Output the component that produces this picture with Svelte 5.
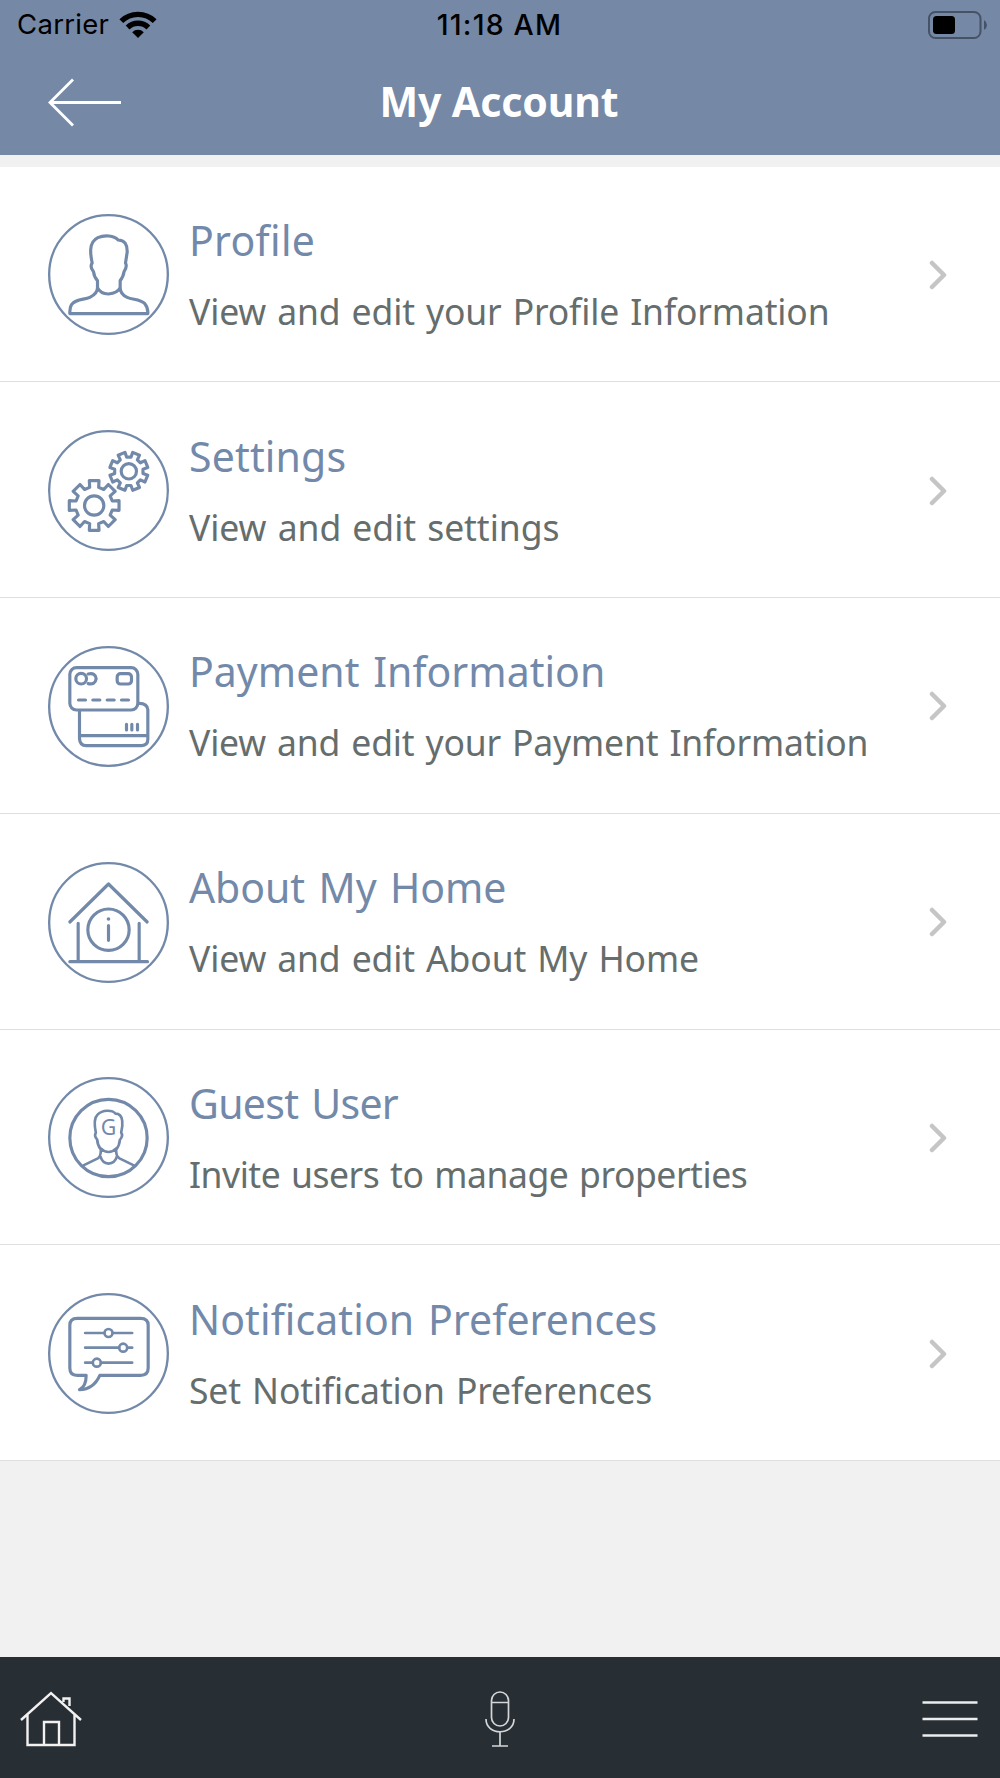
<script>
	// spacing holds the letter-spacing of the title and the text, in px
	const items = [
		{ icon: 'profile', title: 'Profile', text: 'View and edit your Profile Information', spacing: [0.3, -0.14] },
		{ icon: 'settings', title: 'Settings', text: 'View and edit settings', spacing: [0.15, -0.05] },
		{ icon: 'payment', title: 'Payment Information', text: 'View and edit your Payment Information', spacing: [0.02, -0.17] },
		{ icon: 'home', title: 'About My Home', text: 'View and edit About My Home', spacing: [-0.08, -0.13] },
		{ icon: 'guest', title: 'Guest User', text: 'Invite users to manage properties', spacing: [-0.7, -0.46] },
		{ icon: 'notify', title: 'Notification Preferences', text: 'Set Notification Preferences', spacing: [0.08, -0.12] }
	];

	/**
	 * Outline of an eight-toothed gear
	 * @param {number} cx
	 * @param {number} cy
	 * @param {number} outer
	 * @param {number} inner
	 * @param {number} offset rotation in degrees
	 * @returns {string}
	 */
	function gearPath(cx, cy, outer, inner, offset) {
		const points = [];
		for (let i = 0; i < 8; i++) {
			const mid = i * 45 + offset;
			for (const [r, a] of [
				[inner, mid - 14],
				[outer, mid - 11],
				[outer, mid + 11],
				[inner, mid + 14]
			]) {
				const rad = (a * Math.PI) / 180;
				points.push(`${(cx + r * Math.sin(rad)).toFixed(1)} ${(cy - r * Math.cos(rad)).toFixed(1)}`);
			}
		}
		return `M${points.join('L')}Z`;
	}
</script>

<div class="screen">
	<header class="header">
		<div class="status">
			<div class="status__carrier">
				<span>Carrier</span>
				<svg width="38" height="28" viewBox="0 0 38 28" aria-hidden="true">
					<g fill="none" stroke="#000" stroke-width="5.4">
						<path d="M2.3 10.1a24 24 0 0 1 33.4 0" />
						<path d="M8.6 16.5a15 15 0 0 1 20.8 0" />
					</g>
					<path d="M13.2 21.2a8.3 8.3 0 0 1 11.6 0L19 27z" />
				</svg>
			</div>
			<span class="status__time">11:18 AM</span>
			<svg class="status__battery" width="60" height="28" viewBox="0 0 60 28" aria-hidden="true">
				<rect x="1" y="1" width="51.5" height="26" rx="6.5" fill="none" stroke="#465266" stroke-width="2" />
				<rect x="5" y="5" width="22" height="18" rx="3.5" />
				<path d="M56 9q3 2 3 5t-3 5z" fill="#465266" />
			</svg>
		</div>
		<div class="navbar">
			<button type="button" class="navbar__back" aria-label="Back">
				<svg width="74" height="50" viewBox="0 0 74 50" fill="none" stroke="#fff" stroke-width="2.8">
					<path d="M73 25.500H2M25 2.500 2 25.500l23 23" />
				</svg>
			</button>
			<h1>My Account</h1>
		</div>
	</header>

	<main>
		{#each items as item}
			<div class="row">
				<svg class="row__icon" viewBox="24.5 27 363 363" aria-hidden="true">
					<circle class="ring" cx="206" cy="208.5" r="178" />
					{#if item.icon === 'profile'}
						<path d="M90 326H324Q325 308 315 296C300 281 278 285 262 277Q241 267 241 248V227Q250 217 253 199Q263 184 257 174L262 142C263 118 254 105 235 105C223 91 194 89 174 98C145 112 152 150 157 174Q149 185 161 200Q163 217 173 227V248Q173 265 150 277C134 285 109 280 95 299Q89 309 90 326ZM173 248Q181 266 206 267Q233 265 241 248" />
					{:else if item.icon === 'settings'}
						<path d={gearPath(163, 253.5, 76, 56, 0)} />
						<circle cx="163" cy="253.5" r="29" />
						<path d={gearPath(267, 151, 58, 43, 22.5)} />
						<circle cx="267" cy="151" r="23" />
					{:else if item.icon === 'payment'}
						<rect x="90" y="92" width="204" height="127" rx="20" />
						<path d="M119 221V305Q120 326 139 326H306Q324 325 324 307V218Q322 199 298 199M121 296H323" />
						<circle cx="124" cy="125" r="16" />
						<path d="M145 111Q167 106 169 125Q166 144 145 140" />
						<rect x="232" y="110" width="43" height="31" rx="10" />
						<path d="M116 189H137M159 189H180M202 189H223M245 189H266M260 262V279M276 262V279M293 262V279" />
					{:else if item.icon === 'home'}
						<path d="M90 207 206 93 322 207M115 211V325M298 211V325M90 326H323M206 218V262" />
						<circle cx="206" cy="230" r="62" />
						<circle class="dot" cx="206" cy="198" r="5.5" />
					{:else if item.icon === 'guest'}
						<circle cx="206" cy="210" r="116" />
						<path class="thin" d="M131 292 174 271Q183 266 183 245Q173 232 172 215Q162 203 168 194C164 174 162 150 173 140C188 125 217 125 227 137C253 137 249 174 244 194Q251 203 240 216Q239 232 229 245Q228 265 239 271L282 292M183 241Q193 252 206 252Q219 252 229 241M182 266Q188 286 206 287Q225 286 231 266" />
						<text x="206" y="201">G</text>
					{:else}
						<path d="M139 274H112Q90 274 90 252V124Q90 103 112 103H302Q325 103 325 124V252Q325 274 302 274H180Q161 316 119 317Q139 308 139 274Z" />
						<path class="thin" d="M136 147H194M219 147H277M136 191H238M263 191H277M136 236H158M183 236H277" />
						<circle class="thin" cx="206" cy="147" r="12" />
						<circle class="thin" cx="250" cy="191" r="12" />
						<circle class="thin" cx="171" cy="236" r="12" />
					{/if}
				</svg>
				<div class="row__body">
					<h2 style="letter-spacing: {item.spacing[0]}px">{item.title}</h2>
					<p style="letter-spacing: {item.spacing[1]}px">{item.text}</p>
				</div>
				<svg class="row__chevron" width="18" height="30" viewBox="0 0 18 30" aria-hidden="true">
					<path d="m3 3 12 12L3 27" />
				</svg>
			</div>
		{/each}
	</main>

	<footer class="tabbar">
		<button type="button" aria-label="Home">
			<svg width="62" height="56" viewBox="0 0 62 56" fill="none" stroke="#f3f1f0" stroke-width="2.4">
				<path d="M1 29 31 2l30 27M7.500 24V54h47V24M24 54V31H39V54M43.500 11V7.500h6V15" />
			</svg>
		</button>
		<button type="button" aria-label="Voice">
			<svg width="32" height="58" viewBox="0 0 32 58" fill="none" stroke="#d4d6d7" stroke-width="1.7">
				<rect x="7.500" y="2" width="17" height="34" rx="8.500" />
				<path d="M7.500 12.500h17M2 29c0 17 28 17 28 0M16 42V56M8 56H24" />
			</svg>
		</button>
		<button type="button" aria-label="Menu">
			<svg width="56" height="38" viewBox="0 0 56 38" stroke="#eceded" stroke-width="2.6">
				<path d="M.5 2.500H55.500M.5 19H55.500M.5 35.500H55.500" />
			</svg>
		</button>
	</footer>
</div>

<style>
	:global(body) {
		margin: 0;
	}

	.screen {
		display: flex;
		flex-direction: column;
		width: 1000px;
		height: 1778px;
		background: #f1f1f1;
		font-family: 'Noto Sans', sans-serif;
		overflow: hidden;
	}

	button {
		display: block;
		padding: 0;
		border: none;
		background: none;
	}

	svg {
		display: block;
		flex-shrink: 0;
	}

	.header {
		height: 154.5px;
		margin-bottom: 12px;
		background: #7588a6;
		flex-shrink: 0;
	}

	.status {
		display: grid;
		grid-template-columns: 1fr auto 1fr;
		align-items: center;
		height: 49px;
		padding: 0 12px 1px 17px;
		font: 27.5px/49px Inter, sans-serif;
	}

	.status__carrier {
		display: flex;
		align-items: center;
		gap: 10px;
		letter-spacing: 0.3px;
	}

	.status__time {
		margin-right: 6px;
		font-size: 28.5px;
		font-weight: 500;
		letter-spacing: 1.2px;
	}

	.status__battery {
		justify-self: end;
	}

	.navbar {
		display: grid;
		grid-template-columns: 1fr auto 1fr;
		align-items: center;
		height: 104px;
		padding: 0 48px;
	}

	h1 {
		margin: -2px 2px 0 0;
		color: #fff;
		font-size: 41px;
		font-weight: 700;
		line-height: 60px;
		letter-spacing: -0.1px;
	}

	.row {
		display: flex;
		align-items: center;
		box-sizing: border-box;
		height: 215.75px;
		padding: 2px 53px 0 48px;
		background: #fff;
		border-bottom: 1px solid #dfdfdf;
	}

	.row__icon {
		width: 121px;
		height: 121px;
		fill: none;
		stroke: #7389aa;
		stroke-width: 9.5;
		stroke-linecap: round;
		stroke-linejoin: round;
	}

	.row__icon .ring {
		stroke-width: 7;
	}

	.row__icon .thin {
		stroke-width: 8;
	}

	.row__icon .dot,
	.row__icon text {
		fill: #7389aa;
		stroke: none;
	}

	.row__icon text {
		font-size: 64px;
		text-anchor: middle;
	}

	.row__body {
		flex: 1;
		min-width: 0;
		padding-left: 20px;
		white-space: nowrap;
	}

	h2 {
		margin: 0;
		color: #7389aa;
		font-size: 41px;
		font-weight: 400;
		line-height: 72px;
		word-spacing: 3px;
	}

	p {
		margin: 0;
		color: #656d6d;
		font-size: 35.5px;
		line-height: 70px;
		word-spacing: 2px;
	}

	.row__chevron {
		fill: none;
		stroke: #c5c5c5;
		stroke-width: 4.5;
		stroke-linecap: round;
		stroke-linejoin: round;
	}

	.tabbar {
		display: grid;
		grid-template-columns: 1fr auto 1fr;
		align-items: center;
		box-sizing: border-box;
		height: 121px;
		margin-top: auto;
		padding: 2px 22px 0 20px;
		background: #272e34;
		flex-shrink: 0;
	}

	.tabbar button:nth-child(2) {
		margin-left: 2px;
	}

	.tabbar button:last-child {
		justify-self: end;
	}
</style>
